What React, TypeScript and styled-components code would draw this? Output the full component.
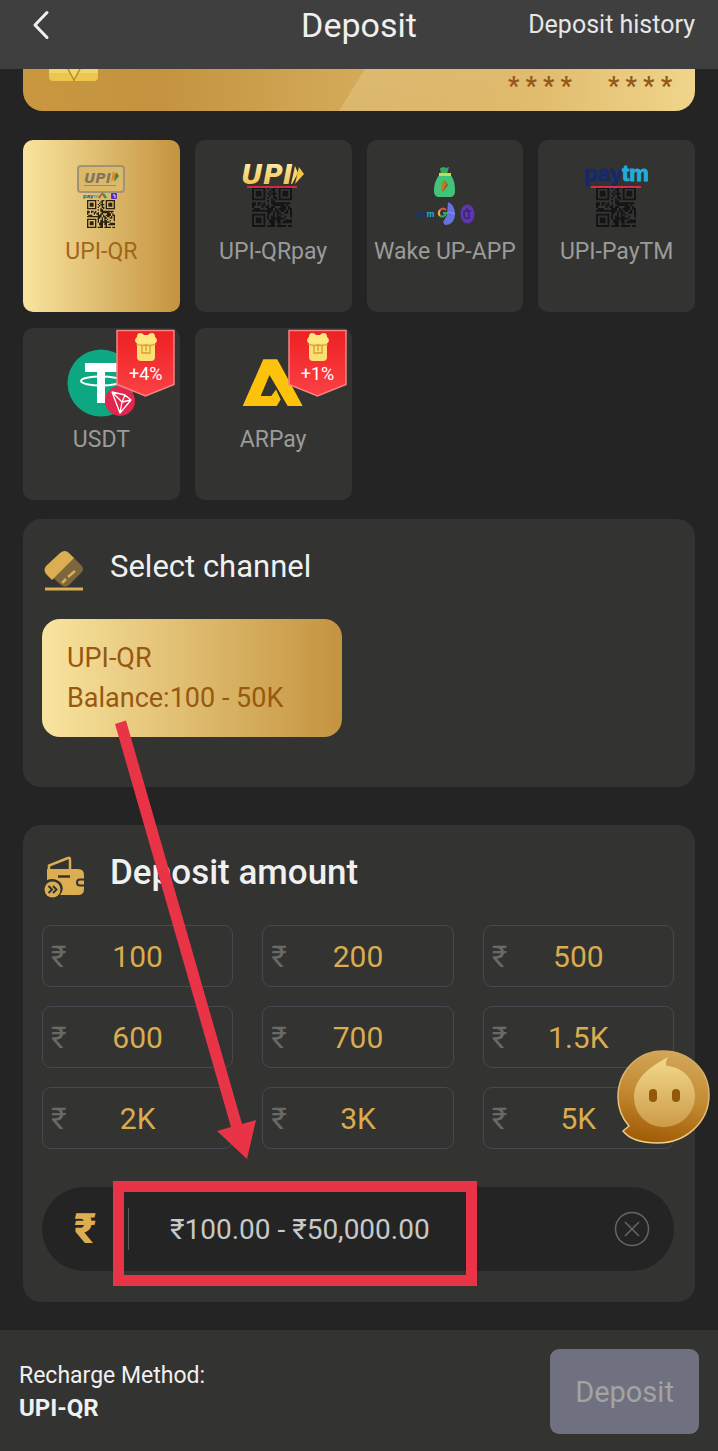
import React, { useState } from "react";
import styled, { createGlobalStyle, css } from "styled-components";

const GlobalStyle = createGlobalStyle`
  *, *::before, *::after { box-sizing: border-box; }
  body {
    margin: 0;
    background: #242424;
    color: #f0f0f0;
    font-family: Roboto, "Noto Sans", sans-serif;
  }
  button, input { font-family: inherit; }
  button { border: 0; padding: 0; background: none; color: inherit; cursor: pointer; }
`;

const gold = "linear-gradient(90deg, #f9e49f 0%, #c4933f 100%)";

const Page = styled.div`
  position: relative;
  min-height: 100vh;
  display: flex;
  flex-direction: column;
`;

const Header = styled.header`
  display: grid;
  grid-template-columns: 1fr auto 1fr;
  align-items: center;
  padding: 0 23px 19px;
  background: #3f3f3f;
`;

const BackButton = styled.button`
  justify-self: start;
  display: flex;
  padding: 0 8px;
`;

const PageTitle = styled.h1`
  margin: 0;
  font-size: 34px;
  line-height: 50px;
  font-weight: 400;
`;

const HistoryLink = styled.a`
  justify-self: end;
  color: #e6e6e6;
  font-size: 25px;
  line-height: 50px;
  text-decoration: none;
`;

const Main = styled.main`
  flex: 1;
  padding: 0 23px 28px;
`;

const BalanceCard = styled.div`
  display: flex;
  justify-content: space-between;
  align-items: flex-start;
  height: 42px;
  margin-bottom: 29px;
  padding: 0 23px 0 26px;
  overflow: hidden;
  border-radius: 0 0 20px 20px;
  background:
    linear-gradient(122deg, transparent 49%, rgba(240, 215, 160, 0.32) 49%, rgba(240, 215, 160, 0) 74%),
    linear-gradient(90deg, #c8973f 0%, #c4933f 20%, #d6ae5e 55%, #e2bd70 78%, #efd58b 100%);
`;

const CardNumber = styled.div`
  display: flex;
  gap: 36px;
  padding-top: 4px;
  color: #94591a;
  font-size: 25px;
  line-height: 28px;
  font-weight: 700;
`;

const MethodGrid = styled.div`
  display: grid;
  grid-template-columns: repeat(4, minmax(0, 1fr));
  gap: 16px 15px;
  margin-bottom: 19px;
`;

const MethodCard = styled.button<{ $active?: boolean }>`
  position: relative;
  display: flex;
  flex-direction: column;
  align-items: center;
  gap: 8px;
  height: 172px;
  padding-top: 20px;
  border-radius: 10px;
  background: ${(p) => (p.$active ? gold : "#333331")};
  color: ${(p) => (p.$active ? "#a0661a" : "#9b9b99")};
  font-size: 23px;
  line-height: 28px;
  white-space: nowrap;
`;

const Ribbon = styled.span`
  position: absolute;
  top: 1px;
  right: 3px;
  width: 62px;
  height: 70px;
  color: #fff;
  font-size: 18px;
  line-height: 20px;
  text-align: center;
  padding-top: 35px;

  svg { position: absolute; top: 0; left: 0; }
  span { position: relative; }
`;

const Panel = styled.section<{ $bottom: number }>`
  position: relative;
  padding: 0 21px ${(p) => p.$bottom}px 19px;
  border-radius: 18px;
  background: #333331;

  & + & { margin-top: 38px; }
`;

const PanelHead = styled.div`
  display: flex;
  align-items: center;
  gap: 26px;
  height: 96px;
  margin-bottom: 4px;
  padding-left: 2px;

  svg { margin-top: 8px; }
`;

const PanelTitle = styled.h2<{ $strong?: boolean }>`
  margin: 0;
  font-size: ${(p) => (p.$strong ? 35 : 31)}px;
  line-height: 40px;
  font-weight: ${(p) => (p.$strong ? 500 : 400)};
`;

const ChannelButton = styled.button`
  display: flex;
  flex-direction: column;
  align-items: flex-start;
  width: 300px;
  padding: 19px 25px;
  border-radius: 18px;
  background: ${gold};
  color: #96590f;
  font-size: 27px;
  line-height: 40px;
`;

const AmountGrid = styled.div`
  display: grid;
  grid-template-columns: repeat(3, minmax(0, 1fr));
  gap: 19px 29px;
  margin-bottom: 38px;
`;

const AmountButton = styled.button`
  display: grid;
  grid-template-columns: 1fr auto 1fr;
  align-items: center;
  height: 62px;
  padding: 0 8px;
  border: 1px solid #484850;
  border-radius: 9px;
  color: #d9ac4f;
  font-size: 30px;
`;

const Rupee = styled.span`
  justify-self: start;
  color: #696967;
`;

const Field = styled.div`
  display: flex;
  align-items: center;
  height: 84px;
  padding: 0 24px 0 32px;
  border-radius: 42px;
  background: #242424;
`;

const FieldLabel = styled.label`
  width: 54px;
  color: #dcae50;
  font-size: 42px;
  line-height: 48px;
  font-weight: 900;
`;

const FieldInput = styled.input`
  flex: 1;
  min-width: 0;
  height: 42px;
  padding: 0 0 0 41px;
  border: 0;
  border-left: 1px solid #5a5a5a;
  outline: none;
  background: transparent;
  color: #d0d0d0;
  font-size: 28px;

  &::placeholder { color: #c8c8c8; opacity: 1; }
`;

const ClearButton = styled.button`
  display: flex;
`;

const Assistant = styled.button`
  position: absolute;
  right: -16px;
  bottom: 157px;
  display: flex;
`;

const Footer = styled.footer`
  display: flex;
  justify-content: space-between;
  align-items: center;
  padding: 19px 19px 17px;
  background: #333331;
`;

const Summary = styled.p`
  margin: 0;
  font-size: 23px;
  line-height: 32px;

  strong { display: block; font-size: 24px; font-weight: 700; }
`;

const SubmitButton = styled.button`
  width: 149px;
  height: 85px;
  border-radius: 9px;
  background: #6f7180;
  color: #a3a3a3;
  font-size: 29px;
`;

const overlay = css`
  position: absolute;
  pointer-events: none;
`;

const Arrow = styled.svg`
  ${overlay}
  left: 110px;
  top: 716px;
`;

const Highlight = styled.div`
  ${overlay}
  left: 113px;
  top: 1181px;
  width: 364px;
  height: 105px;
  border: 11px solid #e93448;
`;

const N = 21;
const inFinder = (x: number, y: number) =>
  (x < 8 && y < 8) || (x > N - 9 && y < 8) || (x < 8 && y > N - 9);

const qrPath = (() => {
  let seed = 19;
  let d = "";
  for (let y = 0; y < N; y++) {
    for (let x = 0; x < N; x++) {
      seed = (seed * 1103515 + 12345) % 2147483648;
      if (!inFinder(x, y) && seed / 2147483648 > 0.42) d += `M${x} ${y}h1v1h-1z`;
    }
  }
  for (const [x, y] of [[0, 0], [N - 7, 0], [0, N - 7]]) {
    d += `M${x} ${y}h7v7h-7zM${x + 1} ${y + 1}v5h5v-5zM${x + 2} ${y + 2}h3v3h-3z`;
  }
  return d;
})();

const QrCode = ({ x, y, size, color }: { x: number; y: number; size: number; color: string }) => (
  <svg x={x} y={y} width={size} height={size} viewBox={`0 0 ${N} ${N}`}>
    <path d={qrPath} fill={color} />
  </svg>
);

const iconBox = { width: 70, height: 70, viewBox: "0 0 70 70", "aria-hidden": true };
const wide = { fontFamily: '"DejaVu Sans", sans-serif', fontWeight: 700, fontStyle: "oblique" };
const heavy = { fontFamily: '"Liberation Sans", sans-serif', fontWeight: 700 };

const UpiQrIcon = () => (
  <svg {...iconBox}>
    <rect x="12" y="6" width="46" height="26" rx="3" fill="#dcb968" stroke="#a09478" strokeWidth="2" />
    <text x="18" y="23" fontSize="14" fill="#80765f" {...wide}>UPI</text>
    <path d="M47 11l4 5-6 6z" fill="#e58326" />
    <path d="M50 12l3 4-5 6z" fill="#35894a" />
    <path d="M18 25.500h32" stroke="#a28b5b" />
    <text x="17" y="38" fontSize="6" fill="#23527c" {...heavy}>pay<tspan fill="#38a9ba">m</tspan></text>
    <path d="M33 38l4-5" stroke="#da4c35" strokeWidth="2.500" />
    <path d="M35 38l3-4" stroke="#e7b43a" strokeWidth="2" />
    <path d="M37 34l3 4" stroke="#319453" strokeWidth="2.500" />
    <rect x="45" y="33" width="6" height="6" rx="1" fill="#5b2cb5" />
    <path d="M47 35h2v3" fill="none" stroke="#fff" strokeWidth=".8" />
    <QrCode x={21} y={40} size={28} color="#2a210f" />
  </svg>
);

const UpiPayIcon = () => (
  <svg {...iconBox}>
    <defs>
      <linearGradient id="upiGold" x1="0" y1="0" x2="0" y2="1">
        <stop offset="0" stopColor="#fff1b8" />
        <stop offset="1" stopColor="#eebc35" />
      </linearGradient>
    </defs>
    <QrCode x={14} y={27} size={40} color="#141414" />
    <text x="3" y="24" fontSize="27" fill="url(#upiGold)" {...wide}>UPI</text>
    <path d="M57 6l3 7-6 11h-1z" fill="#f5d872" />
    <path d="M61 7l5 7-9 10z" fill="#f2c744" />
    <path d="M9 27h50" stroke="#cf2a45" strokeWidth="2" />
  </svg>
);

const WakeAppIcon = () => (
  <svg {...iconBox}>
    <path d="M30 8l4-1 2 1 3-1-2 7h-6z" fill="#35a864" />
    <path d="M30 14h10c4 5 5 10 5 17 0 4-2 6-5 6H29c-3 0-5-2-5-6 0-7 2-12 6-17z" fill="#41c478" />
    <path d="M29 13h12v3H29z" fill="#c5dc4b" />
    <path d="M33 20l4 5-4 7-2-2z" fill="#c47621" />
    <path d="M34 19l4 6-5 7 3-8z" fill="#8c5e20" />
    <text x="6" y="57" fontSize="9" fill="#15346e" {...heavy}>pa<tspan fill="#27b1d8">m</tspan></text>
    <path d="M36 50a4.500 4.500 0 0 0-6 0" stroke="#df5142" strokeWidth="2" fill="none" />
    <path d="M30 50a5 5 0 0 0 0 6" stroke="#e8b63b" strokeWidth="2" fill="none" />
    <path d="M30 56a5 5 0 0 0 6-2v-1h-3" stroke="#3aa465" strokeWidth="2" fill="none" />
    <path d="M38 42c5 2 7 7 7 12 0 6-3 11-10 11l-2-3 4-7z" fill="#6673df" />
    <path d="M37 53c3-3 5 2 8 0" stroke="#8c98f2" fill="none" />
    <ellipse cx="57.500" cy="54" rx="7" ry="9.500" fill="#6035b5" />
    <path d="M54 51h7M56 48l3 3v7c-3 1-5 0-5-3v-4" stroke="#362568" strokeWidth="1.500" fill="none" />
  </svg>
);

const PaytmIcon = () => (
  <svg {...iconBox}>
    <QrCode x={14} y={27} size={40} color="#141414" />
    <text x="2" y="21" fontSize="22" fill="#152a6b" stroke="#152a6b" {...heavy}>
      pay<tspan fill="#23acd9" stroke="#23acd9">tm</tspan>
    </text>
    <path d="M9 27h50" stroke="#d92e49" strokeWidth="2" />
  </svg>
);

const UsdtIcon = () => (
  <svg {...iconBox}>
    <circle cx="35" cy="35" r="33.500" fill="#0da781" />
    <path d="M19 15h32v9H39v31h-8V24H19z" fill="#fff" />
    <ellipse cx="35" cy="33" rx="20" ry="4.500" fill="none" stroke="#fff" strokeWidth="2" />
    <circle cx="54" cy="53" r="15" fill="#e3264e" />
    <path d="M46 44l13 3 6 5-11 13zM46 44l10 10-2 11M56 54l9-2M56 54l3-7" fill="none" stroke="#fff" strokeWidth="1.300" strokeLinejoin="round" />
  </svg>
);

const ArPayIcon = () => (
  <svg {...iconBox}>
    <path d="M4.700 58L25.300 11.300H39.300L64.700 58H49.700L31.500 27 22.700 48H33.300L38 41.500 42.700 51.500 38.700 58z" fill="#fdc20b" />
  </svg>
);

const BonusRibbon = ({ children }: { children: React.ReactNode }) => (
  <Ribbon>
    <svg width="62" height="70" viewBox="0 0 62 70" aria-hidden>
      <defs>
        <linearGradient id="ribbonRed" x1="0" y1="0" x2="0" y2="1">
          <stop offset="0" stopColor="#ed2023" />
          <stop offset="1" stopColor="#fb4144" />
        </linearGradient>
      </defs>
      <path d="M2 1.500h57v54L30.500 67 2 55.500z" fill="url(#ribbonRed)" stroke="#f58484" strokeWidth="1.500" />
      <path d="M22 14h18v14q0 4-4 4H26q-4 0-4-4z" fill="#fce072" />
      <path d="M20 12q0-3 2-4 0-4 3-4 3 0 4 2h4q1-2 4-2 3 0 3 4 2 1 2 4-1 3-4 2-4 1-7 0-3 1-7 0-3 1-4-2z" fill="#ffe87f" />
      <path d="M21 15q5 2 10 1 5 1 10-1M27 17v7h8v-7M31 17v5" stroke="#d99a38" strokeWidth="1.300" fill="none" />
    </svg>
    <span>{children}</span>
  </Ribbon>
);

const CardIcon = () => (
  <svg width="40" height="40" viewBox="0 0 40 40" aria-hidden>
    <path d="M29 6l8 8q4 4 0 8L25 34q-4 3-8 0l-9-8z" fill="#7c683c" />
    <path d="M16 2q5-4 9 0l5 5L8 29l-6-6q-3-4 0-8z" fill="#dcae51" />
    <path d="M18 32l4-4M24 26l7-6" stroke="#dcae51" strokeWidth="2.500" />
    <path d="M1 38h38" stroke="#dcae51" strokeWidth="3" />
  </svg>
);

const WalletIcon = () => (
  <svg width="40" height="42" viewBox="0 0 40 42" aria-hidden>
    <path d="M5 15V9.500L24 2q2-1 2 2v9" fill="none" stroke="#dcae51" strokeWidth="2.500" />
    <path d="M3 13h31q6 0 6 6v14q0 6-6 6H16q5-6 1-12-6-6-14-3z" fill="#dcae51" />
    <path d="M14 20.500h12" stroke="#333331" strokeWidth="2.500" />
    <path d="M41 23.500h-5q-3 0-3 3t3 3h5" fill="none" stroke="#333331" strokeWidth="2" />
    <circle cx="8.500" cy="33.500" r="8" fill="#dcae51" />
    <path d="M4.500 30l3.500 3.500L4.500 37M9 30l3.500 3.500L9 37" fill="none" stroke="#333331" strokeWidth="2" />
  </svg>
);

const AssistantIcon = () => (
  <svg width="95" height="95" viewBox="0 0 95 95" aria-hidden>
    <defs>
      <linearGradient id="botRim" x1=".6" y1="0" x2=".4" y2="1">
        <stop offset="0" stopColor="#d3a75a" />
        <stop offset=".5" stopColor="#c38a32" />
        <stop offset="1" stopColor="#a05b05" />
      </linearGradient>
      <linearGradient id="botEdge" x1=".6" y1="0" x2=".4" y2="1">
        <stop offset="0" stopColor="#d3a75a" />
        <stop offset="1" stopColor="#f0cf86" />
      </linearGradient>
      <linearGradient id="botFace" x1="0" y1="0" x2="0" y2="1">
        <stop offset="0" stopColor="#f3da8d" />
        <stop offset="1" stopColor="#cd9b48" />
      </linearGradient>
    </defs>
    <path
      d="M47 1C73 1 93 20 93 45c0 27-23 48-51 48-15 0-28-3-35-12l6-5C5 67 2 58 2 47 2 21 22 1 47 1z"
      fill="url(#botRim)"
      stroke="url(#botEdge)"
      strokeWidth="1.500"
    />
    <path d="M52 7c-2 4-3 7-1 9 16 1 28 14 28 30 0 17-14 31-31 31S18 64 18 47C18 27 36 16 52 7z" fill="url(#botFace)" />
    <rect x="33" y="39" width="8" height="13" rx="4" fill="#925809" />
    <rect x="56" y="39" width="8" height="13" rx="4" fill="#925809" />
  </svg>
);

const methods = [
  { name: "UPI-QR", Icon: UpiQrIcon },
  { name: "UPI-QRpay", Icon: UpiPayIcon },
  { name: "Wake UP-APP", Icon: WakeAppIcon },
  { name: "UPI-PayTM", Icon: PaytmIcon },
  { name: "USDT", Icon: UsdtIcon, bonus: "+4%" },
  { name: "ARPay", Icon: ArPayIcon, bonus: "+1%" },
];

const amounts: [string, number][] = [
  ["100", 100], ["200", 200], ["500", 500],
  ["600", 600], ["700", 700], ["1.5K", 1500],
  ["2K", 2000], ["3K", 3000], ["5K", 5000],
];

export default function App() {
  const [method, setMethod] = useState("UPI-QR");
  const [amount, setAmount] = useState("");

  return (
    <Page>
      <GlobalStyle />
      <Header>
        <BackButton aria-label="Back">
          <svg width="20" height="30" viewBox="0 0 20 30" aria-hidden>
            <path d="M16 2.500L4 15 16 27.500" fill="none" stroke="#f0f0f0" strokeWidth="3" strokeLinecap="round" strokeLinejoin="round" />
          </svg>
        </BackButton>
        <PageTitle>Deposit</PageTitle>
        <HistoryLink href="#history">Deposit history</HistoryLink>
      </Header>

      <Main>
        <BalanceCard>
          <svg width="50" height="12" viewBox="0 0 50 12" aria-hidden>
            <path d="M0 0h49v8q0 4-4 4H4q-4 0-4-4z" fill="#edc64e" />
            <path d="M0 0h49v4H0z" fill="#f0d36c" />
            <path d="M19 0l6 11L31 0M25 10v2" fill="#f4d76a" stroke="#b98a2f" strokeWidth="1.500" />
          </svg>
          <CardNumber>
            <span>* * * *</span>
            <span>* * * *</span>
          </CardNumber>
        </BalanceCard>

        <MethodGrid>
          {methods.map(({ name, Icon, bonus }) => (
            <MethodCard key={name} $active={name === method} aria-pressed={name === method} onClick={() => setMethod(name)}>
              <Icon />
              {name}
              {bonus && <BonusRibbon>{bonus}</BonusRibbon>}
            </MethodCard>
          ))}
        </MethodGrid>

        <Panel $bottom={50}>
          <PanelHead>
            <CardIcon />
            <PanelTitle>Select channel</PanelTitle>
          </PanelHead>
          <ChannelButton>
            <span>UPI-QR</span>
            <span>Balance:100 - 50K</span>
          </ChannelButton>
        </Panel>

        <Panel $bottom={31}>
          <PanelHead>
            <WalletIcon />
            <PanelTitle $strong>Deposit amount</PanelTitle>
          </PanelHead>
          <AmountGrid>
            {amounts.map(([label, value]) => (
              <AmountButton key={label} onClick={() => setAmount(String(value))}>
                <Rupee>₹</Rupee>
                {label}
              </AmountButton>
            ))}
          </AmountGrid>
          <Field>
            <FieldLabel htmlFor="amount">₹</FieldLabel>
            <FieldInput
              id="amount"
              inputMode="decimal"
              placeholder="₹100.00 - ₹50,000.00"
              value={amount}
              onChange={(e) => setAmount(e.target.value)}
            />
            <ClearButton aria-label="Clear amount" onClick={() => setAmount("")}>
              <svg width="36" height="36" viewBox="0 0 36 36" aria-hidden>
                <circle cx="18" cy="18" r="16.500" fill="none" stroke="#666" strokeWidth="1.500" />
                <path d="M11 11l14 14M25 11L11 25" stroke="#666" strokeWidth="1.500" />
              </svg>
            </ClearButton>
          </Field>
          <Assistant aria-label="Customer service">
            <AssistantIcon />
          </Assistant>
        </Panel>
      </Main>

      <Footer>
        <Summary>
          Recharge Method:
          <strong>{method}</strong>
        </Summary>
        <SubmitButton>Deposit</SubmitButton>
      </Footer>

      <Arrow width="150" height="446" viewBox="110 716 150 446" aria-hidden>
        <path d="M115 724L126 720.500 242 1124 256 1120 247 1159 217 1131 231 1127z" fill="#e93448" />
      </Arrow>
      <Highlight />
    </Page>
  );
}
